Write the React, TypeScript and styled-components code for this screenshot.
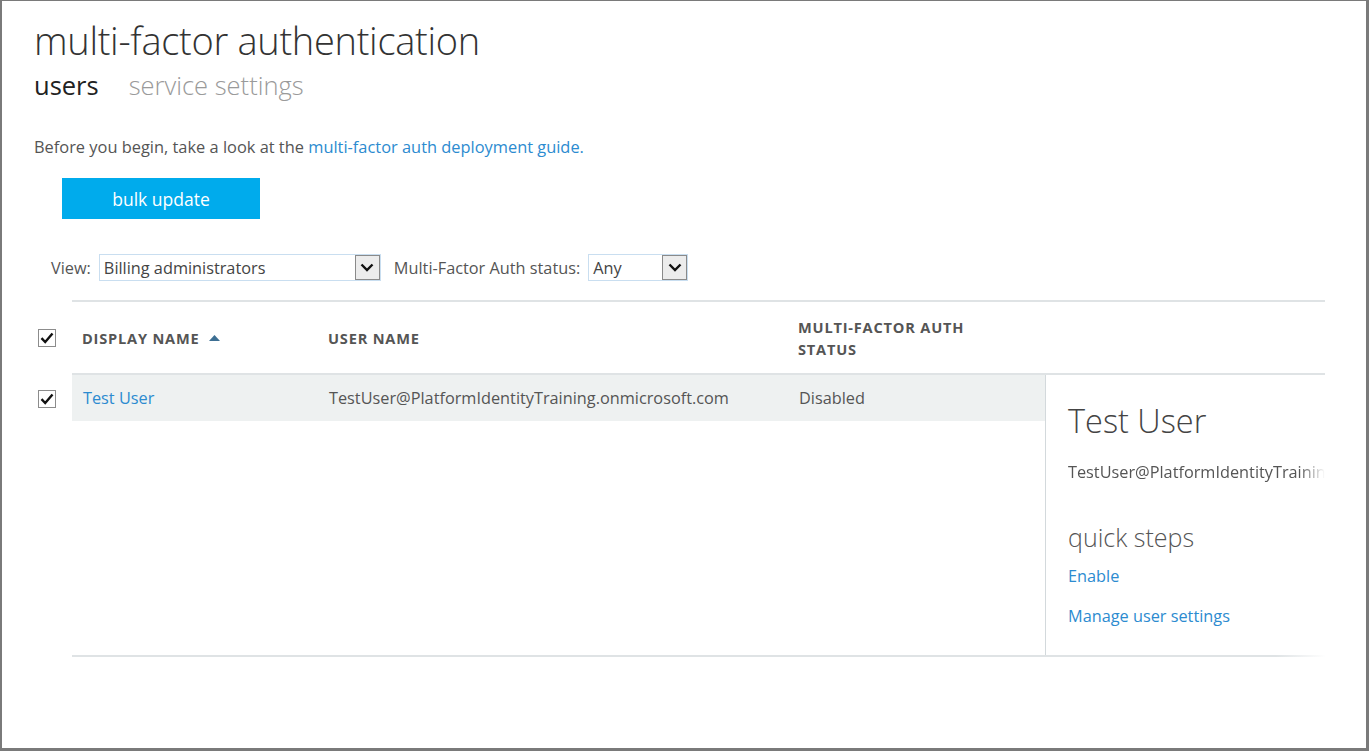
import React from "react";
import styled, { createGlobalStyle } from "styled-components";

const GlobalStyle = createGlobalStyle`
  html, body {
    margin: 0;
    padding: 0;
    background: #ffffff;
  }
  body {
    font-family: "Open Sans", "Noto Sans", sans-serif;
    color: #555555;
  }
`;

const Frame = styled.div`
  box-sizing: border-box;
  width: 1369px;
  height: 751px;
  border-style: solid;
  border-color: #7a7a7a;
  border-width: 1px 3px 3px 2px;
  padding: 16px 0 0 32px;
  overflow: hidden;
`;

const Title = styled.h1`
  margin: 0;
  font-size: 38px;
  font-weight: 300;
  line-height: 46px;
  color: #333333;
  letter-spacing: -0.3px;
`;

const Tabs = styled.div`
  display: flex;
  gap: 30px;
  margin-top: 4px;
`;

const Tab = styled.span<{ $active?: boolean }>`
  font-size: 25.5px;
  font-weight: ${(p) => (p.$active ? 400 : 300)};
  line-height: 36px;
  color: ${(p) => (p.$active ? "#222222" : "#9a9a9a")};
`;

const Intro = styled.p`
  margin: 33px 0 0 0;
  font-size: 16.4px;
  line-height: 22px;
  color: #555555;
`;

const Link = styled.a`
  color: #2c8bd0;
  text-decoration: none;
  cursor: pointer;
`;

const PrimaryButton = styled.button`
  display: block;
  margin: 20px 0 0 28px;
  width: 198px;
  height: 41px;
  border: none;
  background: #00abec;
  color: #ffffff;
  font-family: inherit;
  font-size: 17.5px;
  cursor: pointer;
`;

const Filters = styled.div`
  display: flex;
  align-items: center;
  gap: 8px;
  margin: 35px 0 0 17px;
  font-size: 16.3px;
  color: #555555;
`;

const FilterLabel = styled.span<{ $gap?: number }>`
  margin-left: ${(p) => p.$gap ?? 0}px;
`;

const Select = styled.div<{ $w: number }>`
  box-sizing: border-box;
  display: flex;
  align-items: center;
  justify-content: space-between;
  width: ${(p) => p.$w}px;
  height: 27px;
  border: 1px solid #c9def0;
  padding: 0 0 0 4px;
  font-size: 16.3px;
  color: #444444;
`;

const SelectArrow = styled.span`
  box-sizing: border-box;
  display: flex;
  align-items: center;
  justify-content: center;
  width: 25px;
  height: 25px;
  background: #ececec;
  border: 1px solid #8a8a8a;
`;

const Table = styled.div`
  margin: 19px 0 0 4px;
  width: 1287px;
`;

const HeaderRow = styled.div`
  display: flex;
  height: 75px;
`;

const CheckCell = styled.div`
  width: 34px;
  flex: none;
  display: flex;
  align-items: center;
`;

const HeaderMain = styled.div`
  flex: 1;
  min-width: 0;
  display: grid;
  grid-template-columns: 246px 470px 1fr;
  align-items: center;
  border-top: 2px solid #dfe3e5;
  border-bottom: 2px solid #dfe3e5;
`;

const HeadCell = styled.div`
  padding-left: 10px;
  font-size: 14.6px;
  font-weight: 700;
  line-height: 22px;
  letter-spacing: 0.8px;
  text-transform: uppercase;
  color: #555555;
  display: flex;
  align-items: center;
  gap: 9px;
`;

const Body = styled.div`
  display: flex;
`;

const BodyChecks = styled.div`
  width: 34px;
  flex: none;
`;

const BodyCheckRow = styled.div`
  height: 47px;
  display: flex;
  align-items: center;
`;

const BodyMain = styled.div`
  flex: 1;
  min-width: 0;
  display: flex;
  height: 280px;
  border-bottom: 2px solid;
  border-image: linear-gradient(to right, #dfe3e5 96%, rgba(223, 227, 229, 0) 100%) 1;
`;

const RowList = styled.div`
  width: 973px;
  flex: none;
`;

const DataRow = styled.div<{ $selected?: boolean }>`
  display: grid;
  grid-template-columns: 246px 470px 1fr;
  align-items: center;
  height: 46px;
  background: ${(p) => (p.$selected ? "#eef1f1" : "transparent")};
`;

const DataCell = styled.div`
  padding-left: 11px;
  font-size: 16.3px;
  color: #555555;
  white-space: nowrap;
`;

const Detail = styled.div`
  flex: 1;
  min-width: 0;
  border-left: 1px solid #d3d9dc;
  padding: 24px 0 0 22px;
  overflow: hidden;
`;

const DetailName = styled.div`
  font-size: 32.5px;
  font-weight: 300;
  line-height: 44px;
  color: #444444;
`;

const DetailEmail = styled.div`
  margin-top: 18px;
  font-size: 16.3px;
  color: #555555;
  white-space: nowrap;
  overflow: hidden;
  -webkit-mask-image: linear-gradient(to right, #000 90%, transparent 100%);
  mask-image: linear-gradient(to right, #000 90%, transparent 100%);
`;

const SectionHead = styled.div`
  margin-top: 38px;
  font-size: 25px;
  font-weight: 300;
  line-height: 32px;
  color: #555555;
`;

const StepLink = styled(Link)<{ $mt?: number }>`
  display: block;
  margin-top: ${(p) => p.$mt ?? 0}px;
  font-size: 16.3px;
  line-height: 22px;
`;

const CheckBox: React.FC = () => (
  <svg width="18" height="18" viewBox="0 0 18 18">
    <rect x="0.5" y="0.5" width="17" height="17" fill="#fff" stroke="#8c8c8c" />
    <path d="M3.5 9.2 L7.2 13 L14.5 4.5" fill="none" stroke="#111" strokeWidth="2.4" />
  </svg>
);

const Chevron: React.FC = () => (
  <svg width="14" height="9" viewBox="0 0 14 9">
    <path d="M1.5 1.5 L7 7 L12.5 1.5" fill="none" stroke="#111" strokeWidth="2.4" />
  </svg>
);

const SortUp: React.FC = () => (
  <svg width="11" height="6" viewBox="0 0 11 6">
    <path d="M0 6 L5.5 0 L11 6 Z" fill="#3d6f93" />
  </svg>
);

export default function App() {
  return (
    <>
      <GlobalStyle />
      <Frame>
        <Title>multi-factor authentication</Title>
        <Tabs>
          <Tab $active>users</Tab>
          <Tab>service settings</Tab>
        </Tabs>
        <Intro>
          Before you begin, take a look at the <Link>multi-factor auth deployment guide.</Link>
        </Intro>
        <PrimaryButton>bulk update</PrimaryButton>
        <Filters>
          <FilterLabel>View:</FilterLabel>
          <Select $w={282}>
            Billing administrators
            <SelectArrow>
              <Chevron />
            </SelectArrow>
          </Select>
          <FilterLabel $gap={5}>Multi-Factor Auth status:</FilterLabel>
          <Select $w={100}>
            Any
            <SelectArrow>
              <Chevron />
            </SelectArrow>
          </Select>
        </Filters>
        <Table>
          <HeaderRow>
            <CheckCell>
              <CheckBox />
            </CheckCell>
            <HeaderMain>
              <HeadCell>
                Display name <SortUp />
              </HeadCell>
              <HeadCell>User name</HeadCell>
              <HeadCell>
                Multi-factor auth
                <br />
                status
              </HeadCell>
            </HeaderMain>
          </HeaderRow>
          <Body>
            <BodyChecks>
              <BodyCheckRow>
                <CheckBox />
              </BodyCheckRow>
            </BodyChecks>
            <BodyMain>
              <RowList>
                <DataRow $selected>
                  <DataCell>
                    <Link>Test User</Link>
                  </DataCell>
                  <DataCell>TestUser@PlatformIdentityTraining.onmicrosoft.com</DataCell>
                  <DataCell>Disabled</DataCell>
                </DataRow>
              </RowList>
              <Detail>
                <DetailName>Test User</DetailName>
                <DetailEmail>TestUser@PlatformIdentityTraining.onmicrosoft.com</DetailEmail>
                <SectionHead>quick steps</SectionHead>
                <StepLink $mt={12}>Enable</StepLink>
                <StepLink $mt={18}>Manage user settings</StepLink>
              </Detail>
            </BodyMain>
          </Body>
        </Table>
      </Frame>
    </>
  );
}
